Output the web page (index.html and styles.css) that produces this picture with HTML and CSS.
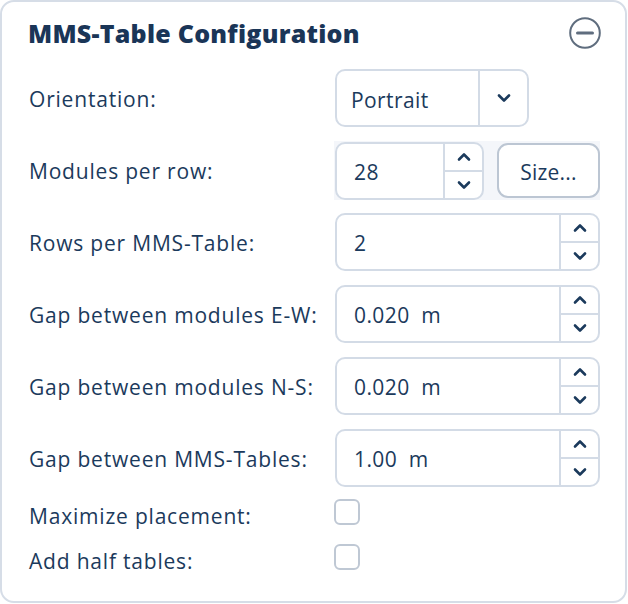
FILE: index.html
```html
<!DOCTYPE html>
<html lang="en">
<head>
<meta charset="utf-8">
<title>MMS-Table Configuration</title>
<link rel="stylesheet" href="styles.css">
</head>
<body>
<section class="panel">
  <header class="panel-head">
    <h2 class="panel-title">MMS-Table Configuration</h2>
    <button class="collapse-btn" type="button" aria-label="Collapse">
      <svg width="32" height="32" viewBox="0 0 32 32"><circle cx="16" cy="16" r="14.8" fill="none" stroke="#5f6d7e" stroke-width="2"/><line x1="8.5" y1="16" x2="23.5" y2="16" stroke="#5f6d7e" stroke-width="3" stroke-linecap="round"/></svg>
    </button>
  </header>

  <div class="form">
    <label class="field-label">Orientation:</label>
    <div class="control">
      <div class="select">
        <span class="select-value">Portrait</span>
        <span class="select-arrow">
          <svg width="14" height="10" viewBox="0 0 14 10"><path d="M2 2.5 L7 7.5 L12 2.5" fill="none" stroke="#1b3a5c" stroke-width="2.6" stroke-linecap="round" stroke-linejoin="round"/></svg>
        </span>
      </div>
    </div>

    <label class="field-label">Modules per row:</label>
    <div class="control">
      <div class="control-group">
        <div class="spin spin-short">
          <span class="spin-value">28</span>
          <span class="spin-buttons">
            <span class="spin-btn"><svg width="14" height="10" viewBox="0 0 14 10"><path d="M2 7.5 L7 2.5 L12 7.5" fill="none" stroke="#1b3a5c" stroke-width="2.6" stroke-linecap="round" stroke-linejoin="round"/></svg></span>
            <span class="spin-btn"><svg width="14" height="10" viewBox="0 0 14 10"><path d="M2 2.5 L7 7.5 L12 2.5" fill="none" stroke="#1b3a5c" stroke-width="2.6" stroke-linecap="round" stroke-linejoin="round"/></svg></span>
          </span>
        </div>
        <button class="size-btn" type="button">Size...</button>
      </div>
    </div>

    <label class="field-label">Rows per MMS-Table:</label>
    <div class="control">
      <div class="spin">
        <span class="spin-value">2</span>
        <span class="spin-buttons">
          <span class="spin-btn"><svg width="14" height="10" viewBox="0 0 14 10"><path d="M2 7.5 L7 2.5 L12 7.5" fill="none" stroke="#1b3a5c" stroke-width="2.6" stroke-linecap="round" stroke-linejoin="round"/></svg></span>
          <span class="spin-btn"><svg width="14" height="10" viewBox="0 0 14 10"><path d="M2 2.5 L7 7.5 L12 2.5" fill="none" stroke="#1b3a5c" stroke-width="2.6" stroke-linecap="round" stroke-linejoin="round"/></svg></span>
        </span>
      </div>
    </div>

    <label class="field-label">Gap between modules E-W:</label>
    <div class="control">
      <div class="spin">
        <span class="spin-value">0.020&nbsp; m</span>
        <span class="spin-buttons">
          <span class="spin-btn"><svg width="14" height="10" viewBox="0 0 14 10"><path d="M2 7.5 L7 2.5 L12 7.5" fill="none" stroke="#1b3a5c" stroke-width="2.6" stroke-linecap="round" stroke-linejoin="round"/></svg></span>
          <span class="spin-btn"><svg width="14" height="10" viewBox="0 0 14 10"><path d="M2 2.5 L7 7.5 L12 2.5" fill="none" stroke="#1b3a5c" stroke-width="2.6" stroke-linecap="round" stroke-linejoin="round"/></svg></span>
        </span>
      </div>
    </div>

    <label class="field-label">Gap between modules N-S:</label>
    <div class="control">
      <div class="spin">
        <span class="spin-value">0.020&nbsp; m</span>
        <span class="spin-buttons">
          <span class="spin-btn"><svg width="14" height="10" viewBox="0 0 14 10"><path d="M2 7.5 L7 2.5 L12 7.5" fill="none" stroke="#1b3a5c" stroke-width="2.6" stroke-linecap="round" stroke-linejoin="round"/></svg></span>
          <span class="spin-btn"><svg width="14" height="10" viewBox="0 0 14 10"><path d="M2 2.5 L7 7.5 L12 2.5" fill="none" stroke="#1b3a5c" stroke-width="2.6" stroke-linecap="round" stroke-linejoin="round"/></svg></span>
        </span>
      </div>
    </div>

    <label class="field-label">Gap between MMS-Tables:</label>
    <div class="control">
      <div class="spin">
        <span class="spin-value">1.00&nbsp; m</span>
        <span class="spin-buttons">
          <span class="spin-btn"><svg width="14" height="10" viewBox="0 0 14 10"><path d="M2 7.5 L7 2.5 L12 7.5" fill="none" stroke="#1b3a5c" stroke-width="2.6" stroke-linecap="round" stroke-linejoin="round"/></svg></span>
          <span class="spin-btn"><svg width="14" height="10" viewBox="0 0 14 10"><path d="M2 2.5 L7 7.5 L12 2.5" fill="none" stroke="#1b3a5c" stroke-width="2.6" stroke-linecap="round" stroke-linejoin="round"/></svg></span>
        </span>
      </div>
    </div>
  </div>

  <div class="checks">
    <label class="field-label check-label">Maximize placement:</label>
    <span class="checkbox"></span>
    <label class="field-label check-label">Add half tables:</label>
    <span class="checkbox"></span>
  </div>
</section>
</body>
</html>
```

FILE: styles.css
```css
* { box-sizing: border-box; }

html, body {
  margin: 0;
  background: #ffffff;
}

body {
  font-family: "Open Sans", "Noto Sans", sans-serif;
  color: #1b3a5c;
}

.panel {
  width: 627px;
  height: 603px;
  border: 2px solid #d6dde7;
  border-radius: 14px;
  padding: 14px 26px 0 26px;
  background: #ffffff;
}

.panel-head {
  display: flex;
  align-items: center;
  justify-content: space-between;
  height: 33px;
  margin-bottom: 20px;
}

.panel-title {
  margin: 0;
  font-size: 25px;
  font-weight: 800;
  letter-spacing: 0.25px;
  color: #1a3557;
}

.collapse-btn {
  border: 0;
  background: none;
  padding: 0;
  margin-right: -2px;
  width: 32px;
  height: 32px;
  display: flex;
}

.form {
  display: grid;
  grid-template-columns: 307px 266px;
  row-gap: 14px;
  align-items: center;
}

.field-label {
  font-size: 21px;
  letter-spacing: 0.8px;
  color: #1b3a5c;
  padding-left: 1px;
  padding-top: 2px;
}

.control {
  display: flex;
  height: 58px;
}

.select {
  display: flex;
  width: 194px;
  height: 58px;
  border: 2px solid #d3dbe6;
  border-radius: 10px;
}

.select-value {
  flex: 1;
  display: flex;
  align-items: center;
  padding-left: 14px;
  padding-top: 3px;
  font-size: 21px;
  letter-spacing: 0.4px;
  border-right: 2px solid #d3dbe6;
}

.select-arrow {
  width: 47px;
  display: flex;
  align-items: center;
  justify-content: center;
}

.control-group {
  display: flex;
  gap: 13px;
  align-items: center;
  width: 266px;
  height: 59px;
  margin-left: -1px;
  padding-left: 1px;
  background: #f4f6fa;
}

.spin {
  display: flex;
  width: 265px;
  height: 58px;
  border: 2px solid #d3dbe6;
  border-radius: 10px;
  background: #ffffff;
}

.spin-short {
  width: 149px;
}

.spin-value {
  flex: 1;
  display: flex;
  align-items: center;
  padding-left: 17px;
  padding-top: 2px;
  font-size: 21px;
  letter-spacing: 0.4px;
  white-space: pre;
  border-right: 2px solid #d3dbe6;
}

.spin-buttons {
  width: 37px;
  display: flex;
  flex-direction: column;
}

.spin-btn {
  flex: 1;
  display: flex;
  align-items: center;
  justify-content: center;
}

.spin-btn + .spin-btn {
  border-top: 2px solid #d3dbe6;
}

.size-btn {
  width: 103px;
  height: 55px;
  border: 2px solid #bcc6d3;
  border-radius: 11px;
  background: #ffffff;
  font-family: inherit;
  font-size: 21px;
  letter-spacing: 0.2px;
  color: #1b3a5c;
  padding: 2px 0 0 0;
}

.checks {
  display: grid;
  grid-template-columns: 306px 26px;
  grid-auto-rows: 26px;
  row-gap: 19px;
  align-items: center;
  margin-top: 12px;
}

.check-label {
  padding-top: 8px;
}

.checkbox {
  width: 26px;
  height: 26px;
  border: 2px solid #bfc8d4;
  border-radius: 6px;
  background: #ffffff;
}
```
